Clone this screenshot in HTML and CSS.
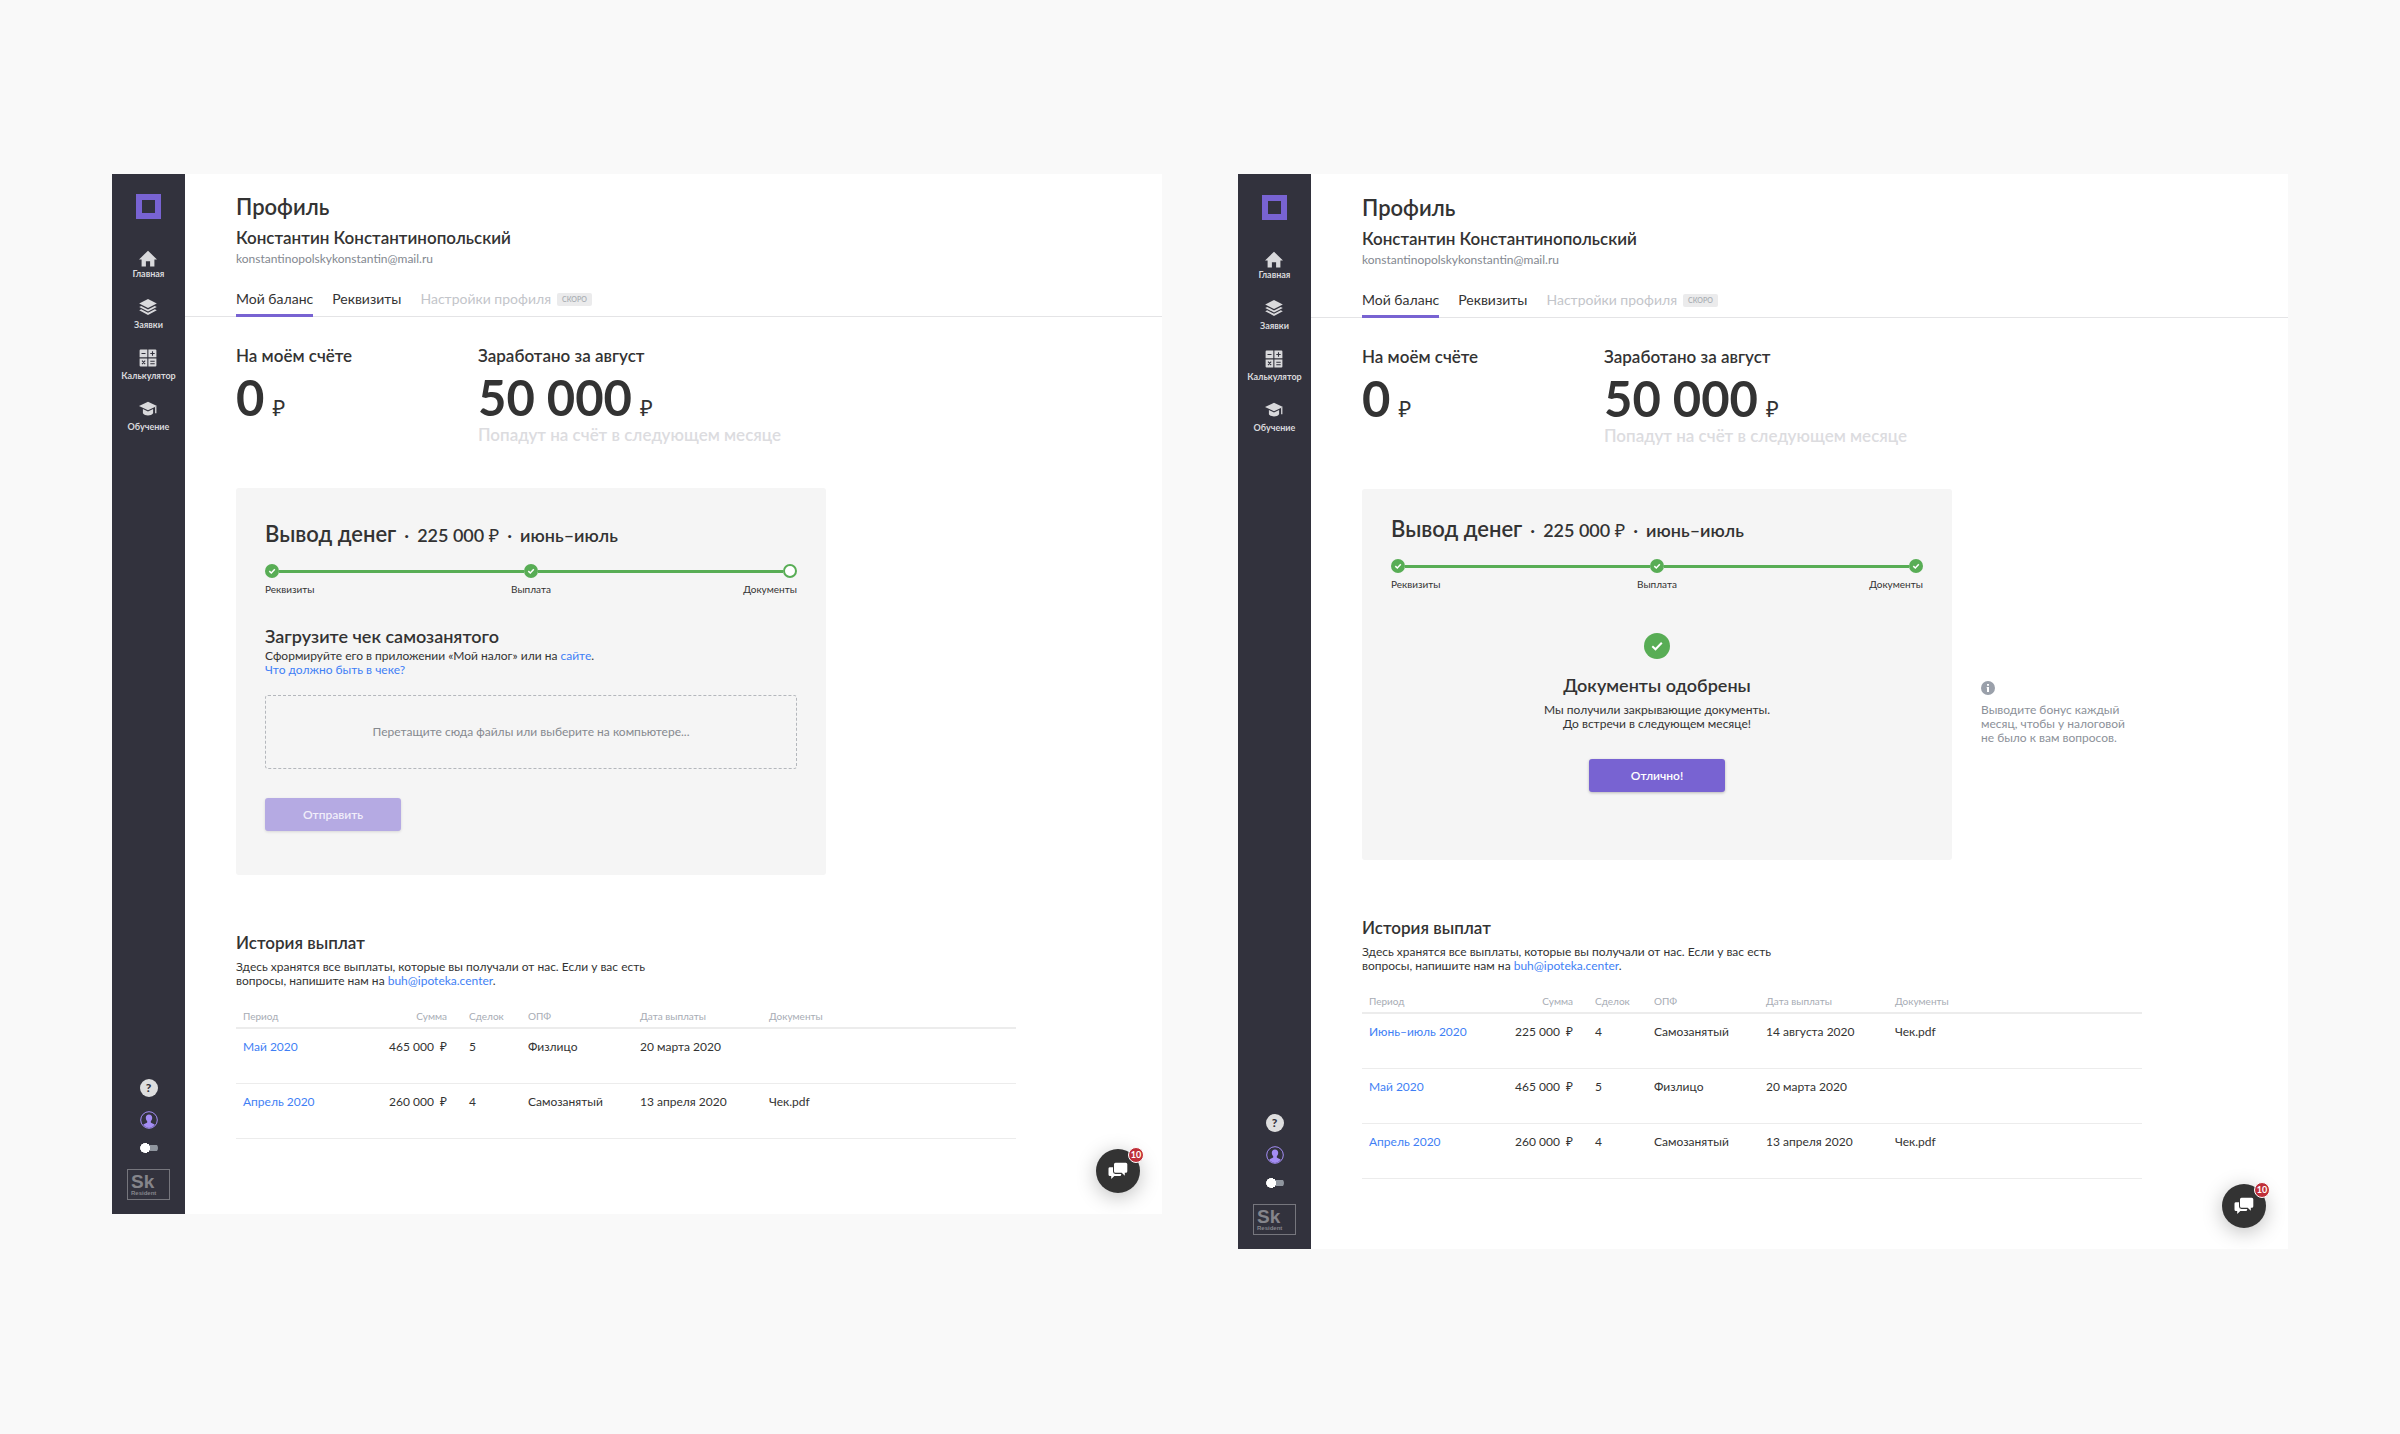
FILE: index.html
```html
<!DOCTYPE html>
<html lang="ru">
<head>
<meta charset="utf-8">
<title>Профиль</title>
<link rel="stylesheet" href="styles.css">
</head>
<body>
<svg class="sprite" aria-hidden="true">
  <symbol id="home" viewBox="0 0 18 18"><path d="M9 .8 0 9.4h2.600V16.600h4.300v-5.400h4.200v5.400h4.300V9.400H18z"/></symbol>
  <symbol id="layers" viewBox="0 0 18 18"><path d="M9 1 17.800 5.500 9 10 .2 5.500z"/><path d="M2.200 7.900.2 8.900 9 13.400l8.800-4.500-2-1L9 11.400z"/><path d="M2.200 11.300l-2 1L9 16.900l8.800-4.600-2-1L9 14.800z"/></symbol>
  <symbol id="calc" viewBox="0 0 18 18"><path d="M1.600.6h6.700v7.700H.6V1.600a1 1 0 0 1 1-1zM9.400.6h7a1 1 0 0 1 1 1v6.700h-8zM.6 9.400h7.700v8H1.600a1 1 0 0 1-1-1zM9.400 9.400h8v7a1 1 0 0 1-1 1h-7z"/><path class="cut" d="M2.500 4.500h4M11.300 4.500h4.400M13.500 2.300v4.400M3 11.700l3.200 3.400M6.200 11.700 3 15.100M11.300 12.300h4.400M11.300 14.700h4.400"/></symbol>
  <symbol id="cap" viewBox="0 0 18 18"><path d="M9 1.800 18 6 9 10.200 0 6z"/><path d="M3.900 9v4.200c1 1.600 3 2.200 5.100 2.200s4.100-.6 5.100-2.200V9L9 11.500zM16.100 6.500h1.300v6.700h-1.300z"/></symbol>
  <symbol id="check" viewBox="0 0 14 14"><circle cx="7" cy="7" r="7"/><path class="tick" d="M4.300 7.100 6.300 9 9.800 5.300"/></symbol>
  <symbol id="check-big" viewBox="0 0 26 26"><circle cx="13" cy="13" r="13"/><path class="tick-big" d="M8.300 13.300 11.500 16.300 17.800 9.800"/></symbol>
  <symbol id="person" viewBox="0 0 18 18"><circle class="ring" cx="9" cy="9" r="8.300"/><path d="M9 3.500c2 0 3.200 1.300 3.200 3.200 0 1.500-.6 2.700-1.400 3.500v1.300c.7.6 2.800 1 4 2.300A8 8 0 0 1 9 17a8 8 0 0 1-5.800-3.200c1.200-1.300 3.300-1.700 4-2.300v-1.300c-.8-.8-1.400-2-1.400-3.500 0-1.900 1.200-3.200 3.200-3.200z"/></symbol>
  <symbol id="chat" viewBox="0 0 20 18"><path d="M2 5.200h3v4.400A2.400 2.400 0 0 0 7.400 12h5.800v.6a1.500 1.500 0 0 1-1.500 1.500H6.300L3.200 17v-2.900H2a1.500 1.500 0 0 1-1.500-1.500v-6A1.500 1.500 0 0 1 2 5.200z"/><path d="M7.500.8h10.300a1.500 1.500 0 0 1 1.500 1.500v6.900a1.500 1.500 0 0 1-1.500 1.500h-1v3.100l-3.100-3.100H7.500A1.500 1.500 0 0 1 6 9.200V2.300A1.500 1.500 0 0 1 7.500.8z"/></symbol>
</svg>
<div class="board">

  <section class="frame">
    <aside class="sidebar">
      <a class="logo" href="#" aria-label="На главную"></a>
      <nav class="menu">
        <a class="menu-item menu-item-tight" href="#"><svg><use href="#home"/></svg>Главная</a>
        <a class="menu-item" href="#"><svg><use href="#layers"/></svg>Заявки</a>
        <a class="menu-item" href="#"><svg><use href="#calc"/></svg>Калькулятор</a>
        <a class="menu-item" href="#"><svg><use href="#cap"/></svg>Обучение</a>
      </nav>
      <div class="tools">
        <button class="help" type="button">?</button>
        <a class="person" href="#" aria-label="Профиль"><svg><use href="#person"/></svg></a>
        <input class="toggle" type="checkbox" aria-label="Тема">
        <div class="sk"><span class="sk-name">Sk</span><span class="sk-note">Resident</span></div>
      </div>
    </aside>
    <main class="main">
      <header class="head">
        <h1>Профиль</h1>
        <p class="name">Константин Константинопольский</p>
        <p class="email">konstantinopolskykonstantin@mail.ru</p>
      </header>
      <nav class="tabs">
        <a class="tab tab-active" href="#">Мой баланс</a>
        <a class="tab" href="#">Реквизиты</a>
        <span class="tab tab-off">Настройки профиля <span class="soon">СКОРО</span></span>
      </nav>
      <div class="content">
        <div class="balance">
          <div><h2 class="label">На моём счёте</h2><p class="amount">0<span>₽</span></p></div>
          <div><h2 class="label">Заработано за август</h2><p class="amount">50 000<span>₽</span></p><p class="note">Попадут на счёт в следующем месяце</p></div>
        </div>
        <section class="card">
          <h2 class="card-title">Вывод денег <small>·</small><small>225 000 <i>₽</i></small><small>·</small><small>июнь–июль</small></h2>
          <div class="track">
            <svg class="dot"><use href="#check"/></svg><span class="rail"></span><svg class="dot"><use href="#check"/></svg><span class="rail"></span><span class="dot dot-open"></span>
          </div>
          <div class="steps"><span>Реквизиты</span><span>Выплата</span><span>Документы</span></div>
          <form class="upload">
            <h3>Загрузите чек самозанятого</h3>
            <p class="text">Сформируйте его в приложении «Мой налог» или на <a href="#">сайте</a>.<br><a href="#">Что должно быть в чеке?</a></p>
            <label class="drop">Перетащите сюда файлы или выберите на компьютере...<input type="file"></label>
            <button class="button" type="submit" disabled>Отправить</button>
          </form>
        </section>
        <section class="history">
          <h2>История выплат</h2>
          <p class="text">Здесь хранятся все выплаты, которые вы получали от нас. Если у вас есть вопросы, напишите нам на <a href="#">buh@ipoteka.center</a>.</p>
          <table>
            <colgroup><col class="c1"><col class="c2"><col class="c3"><col class="c4"><col class="c5"><col></colgroup>
            <thead><tr><th>Период</th><th class="sum">Сумма</th><th>Сделок</th><th>ОПФ</th><th>Дата выплаты</th><th>Документы</th></tr></thead>
            <tbody>
              <tr><td><a href="#">Май 2020</a></td><td class="sum">465 000 &nbsp;₽</td><td>5</td><td>Физлицо</td><td>20 марта 2020</td><td></td></tr>
              <tr><td><a href="#">Апрель 2020</a></td><td class="sum">260 000 &nbsp;₽</td><td>4</td><td>Самозанятый</td><td>13 апреля 2020</td><td>Чек.pdf</td></tr>
            </tbody>
          </table>
        </section>
      </div>
    </main>
    <button class="chat" type="button" aria-label="Чат"><svg><use href="#chat"/></svg><span class="badge">10</span></button>
  </section>

  <section class="frame frame-done">
    <aside class="sidebar">
      <a class="logo" href="#" aria-label="На главную"></a>
      <nav class="menu">
        <a class="menu-item menu-item-tight" href="#"><svg><use href="#home"/></svg>Главная</a>
        <a class="menu-item" href="#"><svg><use href="#layers"/></svg>Заявки</a>
        <a class="menu-item" href="#"><svg><use href="#calc"/></svg>Калькулятор</a>
        <a class="menu-item" href="#"><svg><use href="#cap"/></svg>Обучение</a>
      </nav>
      <div class="tools">
        <button class="help" type="button">?</button>
        <a class="person" href="#" aria-label="Профиль"><svg><use href="#person"/></svg></a>
        <input class="toggle" type="checkbox" aria-label="Тема">
        <div class="sk"><span class="sk-name">Sk</span><span class="sk-note">Resident</span></div>
      </div>
    </aside>
    <main class="main">
      <header class="head">
        <h1>Профиль</h1>
        <p class="name">Константин Константинопольский</p>
        <p class="email">konstantinopolskykonstantin@mail.ru</p>
      </header>
      <nav class="tabs">
        <a class="tab tab-active" href="#">Мой баланс</a>
        <a class="tab" href="#">Реквизиты</a>
        <span class="tab tab-off">Настройки профиля <span class="soon">СКОРО</span></span>
      </nav>
      <div class="content">
        <div class="balance">
          <div><h2 class="label">На моём счёте</h2><p class="amount">0<span>₽</span></p></div>
          <div><h2 class="label">Заработано за август</h2><p class="amount">50 000<span>₽</span></p><p class="note">Попадут на счёт в следующем месяце</p></div>
        </div>
        <div class="card-row">
          <section class="card card-done">
            <h2 class="card-title">Вывод денег <small>·</small><small>225 000 <i>₽</i></small><small>·</small><small>июнь–июль</small></h2>
            <div class="track">
              <svg class="dot"><use href="#check"/></svg><span class="rail"></span><svg class="dot"><use href="#check"/></svg><span class="rail"></span><svg class="dot"><use href="#check"/></svg>
            </div>
            <div class="steps"><span>Реквизиты</span><span>Выплата</span><span>Документы</span></div>
            <div class="done">
              <svg class="done-icon"><use href="#check-big"/></svg>
              <h3>Документы одобрены</h3>
              <p class="text">Мы получили закрывающие документы.<br>До встречи в следующем месяце!</p>
              <button class="button" type="button">Отлично!</button>
            </div>
          </section>
          <aside class="hint">
            <svg class="info" viewBox="0 0 14 14"><circle cx="7" cy="7" r="7"/><path d="M6 3h2v1.800H6zM5.700 5.900H8v5H6V7.300h-.3z"/></svg>
            <p class="text">Выводите бонус каждый месяц, чтобы у налоговой не было к вам вопросов.</p>
          </aside>
        </div>
        <section class="history">
          <h2>История выплат</h2>
          <p class="text">Здесь хранятся все выплаты, которые вы получали от нас. Если у вас есть вопросы, напишите нам на <a href="#">buh@ipoteka.center</a>.</p>
          <table>
            <colgroup><col class="c1"><col class="c2"><col class="c3"><col class="c4"><col class="c5"><col></colgroup>
            <thead><tr><th>Период</th><th class="sum">Сумма</th><th>Сделок</th><th>ОПФ</th><th>Дата выплаты</th><th>Документы</th></tr></thead>
            <tbody>
              <tr><td><a href="#">Июнь–июль 2020</a></td><td class="sum">225 000 &nbsp;₽</td><td>4</td><td>Самозанятый</td><td>14 августа 2020</td><td>Чек.pdf</td></tr>
              <tr><td><a href="#">Май 2020</a></td><td class="sum">465 000 &nbsp;₽</td><td>5</td><td>Физлицо</td><td>20 марта 2020</td><td></td></tr>
              <tr><td><a href="#">Апрель 2020</a></td><td class="sum">260 000 &nbsp;₽</td><td>4</td><td>Самозанятый</td><td>13 апреля 2020</td><td>Чек.pdf</td></tr>
            </tbody>
          </table>
        </section>
      </div>
    </main>
    <button class="chat" type="button" aria-label="Чат"><svg><use href="#chat"/></svg><span class="badge">10</span></button>
  </section>

</div>
</body>
</html>
```
FILE: styles.css
```css
* { box-sizing: border-box; }
body {
  margin: 0;
  background: #f9f9f9;
  color: #333;
  font: 12px/14px Lato, "Noto Sans", sans-serif;
}
h1, h2, h3, p { margin: 0; font-weight: 600; }
p { font-weight: 400; }
a { color: #3f7ff5; text-decoration: none; }
button { font: inherit; border: 0; padding: 0; cursor: pointer; }
.sprite { position: absolute; width: 0; height: 0; }

.board {
  display: flex;
  align-items: flex-start;
  gap: 76px;
  padding: 174px 112px;
}
.frame {
  --top: 19px;
  position: relative;
  flex: 1;
  display: flex;
  background: #fff;
  overflow: hidden;
}
.frame-done { --top: 20px; }

/* Sidebar */
.sidebar {
  flex: none;
  width: 73px;
  display: flex;
  flex-direction: column;
  align-items: center;
  padding: calc(var(--top) + 1px) 0 14px;
  background: #32323d;
}
.logo { width: 25px; height: 25px; border: 6px solid #7863d2; }
.menu { display: flex; flex-direction: column; gap: 18px; margin-top: 31px; }
.menu-item {
  display: flex;
  flex-direction: column;
  align-items: center;
  gap: 3px;
  color: #d9d9dc;
  font-size: 9px;
  line-height: 12px;
  font-weight: 700;
}
.menu-item-tight { gap: 0; }
.menu-item svg { width: 18px; height: 18px; fill: #d9d9dc; }
.cut { fill: none; stroke: #32323d; stroke-width: 1.1; }
.tools { display: flex; flex-direction: column; align-items: center; gap: 14px; margin-top: auto; }
.help {
  width: 18px;
  height: 18px;
  border-radius: 50%;
  background: #dededf;
  color: #32323d;
  font-size: 12px;
  line-height: 18px;
  font-weight: 900;
}
.person, .person svg { display: block; width: 18px; height: 18px; fill: #a48df5; }
.ring { fill: none; stroke: #a48df5; stroke-width: 1; }
.toggle {
  appearance: none;
  width: 18px;
  height: 10px;
  margin: 0;
  border-radius: 5px;
  background: radial-gradient(circle at 5px 5px, #fff 5px, transparent 5px), linear-gradient(#8f959e, #8f959e) right center / 13px 6px no-repeat;
}
.sk {
  display: flex;
  flex-direction: column;
  width: 43px;
  height: 31px;
  margin-top: 2px;
  padding: 3px;
  border: 1px solid #76767d;
  color: #85858b;
  font-family: "Liberation Sans", Arial, sans-serif;
  font-weight: 700;
}
.sk-name { font-size: 19px; line-height: 17px; }
.sk-note { font-size: 6px; line-height: 7px; }

/* Header and tabs */
.main { flex: 1; min-width: 0; padding: var(--top) 0 75px; }
.frame-done .main { padding-bottom: 70px; }
.head, .content { padding: 0 51px; }
h1 { font-size: 22px; line-height: 28px; }
.name { margin-top: 5px; font-size: 17px; line-height: 24px; font-weight: 600; }
.email { margin-top: 1px; line-height: 16px; color: #838890; }
.tabs {
  display: flex;
  gap: 19px;
  margin-top: 22px;
  padding: 0 51px;
  border-bottom: 1px solid #e4e4e6;
}
.tab {
  margin-bottom: -1px;
  padding-bottom: 5px;
  border-bottom: 3px solid transparent;
  color: #333;
  font-size: 14px;
  line-height: 20px;
}
.tab-active { border-color: #7863d2; }
.tab-off { display: flex; align-items: center; gap: 6px; color: #c3c5ca; }
.soon {
  padding: 0 5px;
  border-radius: 2px;
  background: #ebebec;
  color: #a9adb3;
  font-size: 7px;
  line-height: 13px;
  font-weight: 600;
}

/* Balance */
.balance { display: grid; grid-template-columns: 242px 1fr; margin-top: 27px; }
.label { font-size: 17px; line-height: 24px; }
.amount {
  display: flex;
  align-items: baseline;
  gap: 8px;
  margin-top: 4px;
  font-size: 49px;
  line-height: 50px;
  font-weight: 700;
}
.amount span { font-size: 22px; line-height: 22px; font-weight: 400; }
.note { margin-top: 3px; color: #dcdcdf; font-size: 17px; line-height: 20px; font-weight: 600; }

/* Withdrawal card */
.card {
  width: 100%;
  max-width: 590px;
  margin-top: 43px;
  padding: 30px 29px 44px;
  border-radius: 3px;
  background: #f5f5f5;
}
.card-row { display: flex; gap: 29px; margin-top: 43px; }
.card-done { margin-top: 0; padding: 24px 29px 68px; }
.card-title { display: flex; align-items: baseline; gap: 8px; font-size: 22px; line-height: 32px; }
.card-title small { font-size: 18px; line-height: 20px; }
.card-title i { font-style: normal; font-weight: 400; }
.track { display: flex; align-items: center; margin-top: 14px; }
.dot { flex: none; width: 14px; height: 14px; fill: #58ad55; }
.dot-open { border: 2px solid #58ad55; border-radius: 50%; background: #fff; }
.rail { flex: 1; height: 3px; background: #58ad55; }
.tick { fill: none; stroke: #fff; stroke-width: 1.5; }
.tick-big { fill: none; stroke: #fff; stroke-width: 2; }
.steps { display: grid; grid-template-columns: 1fr 1fr 1fr; margin-top: 4px; font-size: 10px; }
.steps :nth-child(2) { text-align: center; }
.steps :nth-child(3) { text-align: right; }
h3 { font-size: 18px; line-height: 24px; }
.upload { margin-top: 28px; }
.upload .text { margin-top: 1px; }
.drop {
  display: flex;
  align-items: center;
  justify-content: center;
  height: 74px;
  margin-top: 18px;
  border: 1px dashed #b4b7bc;
  border-radius: 3px;
  color: #85898f;
}
.drop input { position: absolute; width: 1px; height: 1px; opacity: 0; }
.button {
  width: 136px;
  height: 33px;
  border-radius: 3px;
  background: #7863d2;
  box-shadow: 0 1px 3px rgba(0, 0, 0, .25);
  color: #fff;
  font-weight: 600;
}
.button:disabled { background: #b5aae3; box-shadow: 0 1px 3px rgba(0, 0, 0, .12); color: #f1eefa; }
.upload .button { margin-top: 29px; }
.done { display: flex; flex-direction: column; align-items: center; margin-top: 42px; text-align: center; }
.done-icon { width: 26px; height: 26px; margin-bottom: 14px; fill: #58ad55; }
.done .text { margin: 6px 0 28px; }
.hint { max-width: 150px; padding-top: 192px; color: #8c9199; }
.info { display: block; width: 14px; height: 14px; margin-bottom: 8px; fill: #9aa0aa; }
.info path { fill: #fff; }

/* History */
.history { margin-top: 56px; }
.history h2 { font-size: 17px; line-height: 24px; }
.history .text { max-width: 420px; margin-top: 5px; }
table {
  width: 100%;
  max-width: 780px;
  margin-top: 21px;
  border-collapse: separate;
  border-spacing: 0;
  table-layout: fixed;
}
.c1 { width: 126px; }
.c2 { width: 100px; }
.c3 { width: 59px; }
.c4 { width: 112px; }
.c5 { width: 129px; }
th {
  padding: 0 7px 4px;
  border-bottom: 2px solid #ececec;
  color: #a7acb4;
  font-size: 10px;
  font-weight: 400;
  text-align: left;
}
td { height: 55px; padding: 11px 7px 0; border-bottom: 1px solid #ececec; vertical-align: top; white-space: nowrap; }
.sum { padding-right: 15px; text-align: right; }

/* Chat */
.chat {
  position: absolute;
  right: 22px;
  bottom: 21px;
  width: 44px;
  height: 44px;
  border-radius: 50%;
  background: #333;
  box-shadow: 0 4px 20px rgba(0, 0, 0, .25);
}
.chat svg { display: block; width: 20px; height: 18px; margin: 0 auto; fill: #fff; }
.badge {
  position: absolute;
  top: -2px;
  right: -4px;
  width: 16px;
  height: 16px;
  border: 1px solid #fff;
  border-radius: 50%;
  background: #bf2f39;
  color: #fff;
  font-size: 9px;
  line-height: 14px;
  font-weight: 700;
}
```
